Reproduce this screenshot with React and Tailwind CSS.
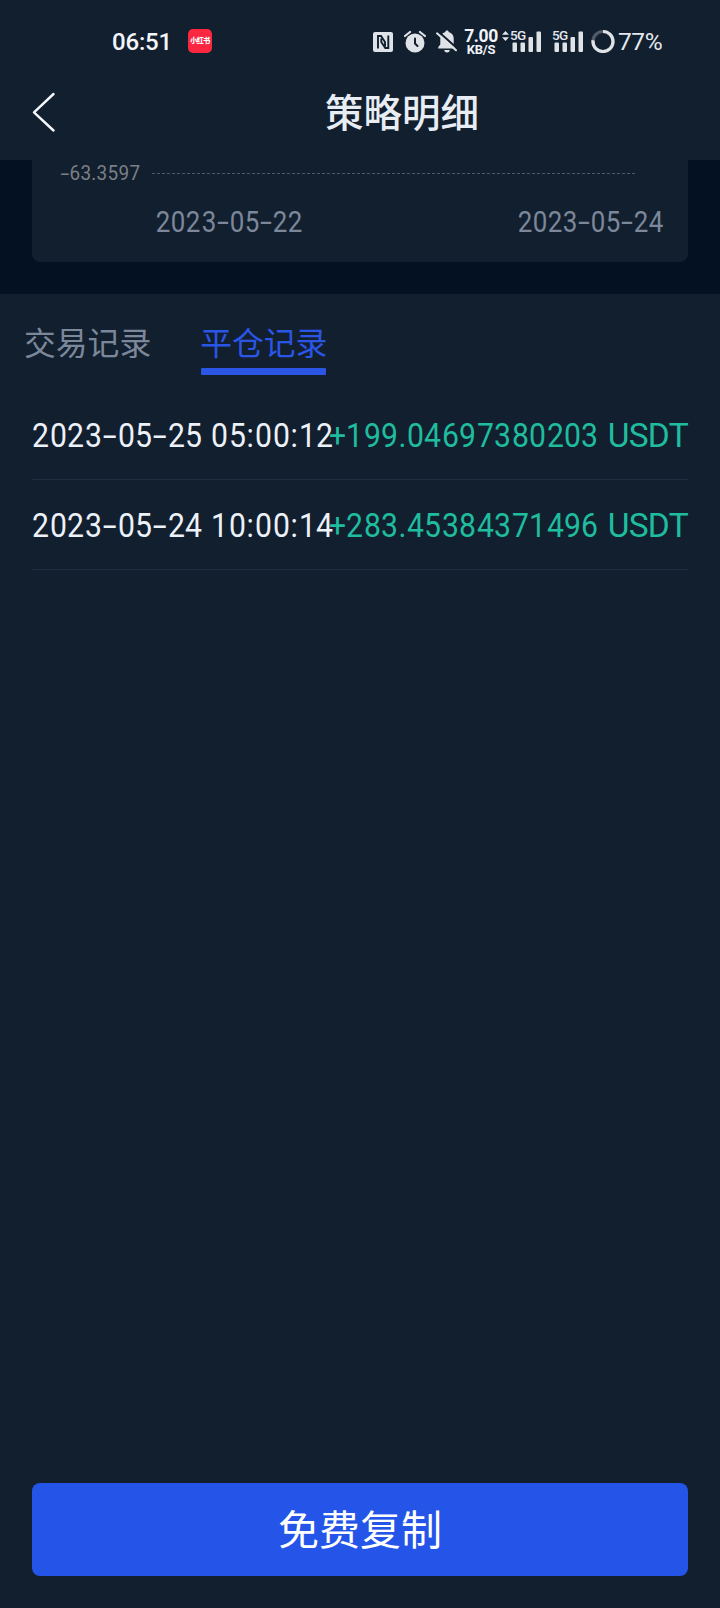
import React, { useState } from 'react';
import clsx from 'clsx';

const records = [
  { time: '2023-05-25 05:00:12', profit: '+199.04697380203', unit: 'USDT' },
  { time: '2023-05-24 10:00:14', profit: '+283.45384371496', unit: 'USDT' },
];

const tabs = ['交易记录', '平仓记录'];

// width of each character cell, digits share one width
const cellClass = (char) => {
  if (char === '-') return 'w-[0.455em]';
  if (char === '+') return 'w-[0.47em]';
  if (char === ':') return 'w-[0.26em]';
  if (char === '.') return 'w-[0.24em]';
  if (char === ' ') return 'w-[0.26em]';
  return 'w-[0.522em]';
};

const Figures = ({ value, className }) => (
  <span className={clsx('inline-flex whitespace-pre leading-none', className)}>
    {value.split('').map((char, i) => (
      <span key={i} className={clsx('flex justify-center', cellClass(char))}>
        <span className={clsx(char === '-' ? 'scale-x-[1.5]' : 'scale-x-[0.9]')}>{char}</span>
      </span>
    ))}
  </span>
);

const Signal = () => (
  <span className="relative block w-8 h-6">
    <svg className="block" width="32" height="24" viewBox="0 0 32 24" fill="#dfe3e7">
      <rect x="2.500" y="13.500" width="4.500" height="9.500" rx="1" />
      <rect x="10.500" y="13.500" width="4.500" height="9.500" rx="1" />
      <rect x="18.500" y="8" width="4.500" height="15" rx="1" />
      <rect x="26.500" y="2.500" width="4.500" height="20.500" rx="1" />
    </svg>
    <span className="absolute left-0 top-0 text-[13.500px] leading-[13px] font-medium tracking-[-0.6px]">5G</span>
  </span>
);

const StatusBar = () => (
  <div className="h-[84px] flex items-start pt-[29px] pl-[112px] text-[#e4e8ee]">
    <span className="w-[76px] mt-px text-[24px] leading-6 font-medium tracking-[-0.2px] text-[#f2f5f9]">06:51</span>
    <span className="w-6 h-6 rounded-[5px] bg-[#fb2640] text-white flex items-center justify-center text-[7px] leading-none font-black whitespace-nowrap tracking-[-0.5px]">
      小红书
    </span>

    {/* NFC */}
    <svg className="ml-[161px]" width="20" height="24" viewBox="0 0 20 24">
      <rect x="0" y="3" width="20" height="20" rx="2" fill="#dfe3e7" />
      <path d="M5 19.500V7h3l4 6v4.500M15.300 6.500V19h-3L8.300 13V9.500" fill="none" stroke="#121f2f" strokeWidth="1.900" />
    </svg>
    {/* Alarm */}
    <svg className="ml-[11px]" width="22" height="24" viewBox="0 0 22 24">
      <circle cx="11" cy="14" r="9.500" fill="#dfe3e7" />
      <path d="M1 7l5-4M21 7l-5-4" stroke="#dfe3e7" strokeWidth="2.200" strokeLinecap="round" />
      <path d="M11 9.500v5l2.500 2.500" fill="none" stroke="#121f2f" strokeWidth="2" strokeLinecap="round" />
    </svg>
    {/* Muted bell */}
    <svg className="ml-[10px]" width="22" height="24" viewBox="0 0 22 24">
      <path d="M11 1.500c1 0 1.700.7 1.700 1.600 3 .8 5 3.300 5 6.400v6l2 2.500v1.500H2.300V18l2-2.500v-6c0-3.100 2-5.600 5-6.400 0-.9.7-1.600 1.700-1.600z" fill="#dfe3e7" />
      <path d="M8.300 21h5.400a2.700 2.500 0 0 1-5.400 0z" fill="#dfe3e7" />
      <path d="M2.800 3l19 17" stroke="#121f2f" strokeWidth="2" />
      <path d="M1 4.300l19 17" stroke="#dfe3e7" strokeWidth="2" strokeLinecap="round" />
    </svg>

    <span className="ml-[5px] w-9 flex flex-col items-center text-[#f0f3f7]">
      <span className="text-[17.500px] leading-[15px] font-bold tracking-[-0.4px]">7.00</span>
      <span className="mt-px text-[13px] leading-[10px] font-bold tracking-[-0.2px]">KB/S</span>
    </span>
    <svg className="ml-[3px] mt-[2px]" width="7" height="10" viewBox="0 0 7 10" fill="#dfe3e7">
      <path d="M3.500 0L7 3.800H0zM3.500 10L0 6.200h7z" />
    </svg>
    <span className="ml-[1px]"><Signal /></span>
    <span className="ml-[10px]"><Signal /></span>

    <svg className="ml-[7px]" width="24" height="24" viewBox="0 0 24 24" fill="none" strokeWidth="3.200">
      <circle cx="12" cy="12.500" r="10" stroke="#505a68" />
      <circle cx="12" cy="12.500" r="10" stroke="#dfe3e7" pathLength="100" strokeDasharray="77 23" transform="rotate(-90 12 12.500)" />
    </svg>
    <span className="ml-[3px] mt-px text-[24.500px] leading-6 tracking-[-0.4px]">77%</span>
  </div>
);

const App = () => {
  const [activeTab, setActiveTab] = useState('平仓记录');

  return (
    <div className="w-[720px] h-[1608px] overflow-hidden flex flex-col bg-[#121f2f] font-[Roboto,'Noto_Sans_CJK_SC',sans-serif]">
      <StatusBar />

      {/* Title bar */}
      <header className="h-[76px] flex items-start pl-8">
        <button className="mt-2">
          <svg width="24" height="40" viewBox="0 0 24 40" fill="none" stroke="#f4f7fb" strokeWidth="2.400" strokeLinecap="round" strokeLinejoin="round">
            <path d="M21.500 2L2 20.300 21.500 38.500" />
          </svg>
        </button>
        <h1 className="ml-[269px] mt-[2px] text-[38.500px] leading-[56px] font-medium text-[#e8edf4]">策略明细</h1>
      </header>

      {/* Chart bottom */}
      <section className="h-[134px] px-8 bg-[#041123]">
        <div className="h-[102px] rounded-b-lg bg-[#121f2f] pl-[29px] pr-6 pt-[3px]">
          <div className="flex items-center h-[21px]">
            <Figures value="-63.3597" className="w-[79px] text-[21px] text-[#7b8086]" />
            <svg className="ml-3" width="483" height="2" viewBox="0 0 483 2">
              <path d="M0 .5h483" stroke="#4f5966" strokeWidth="1" strokeDasharray="3 2" />
            </svg>
          </div>
          <div className="flex justify-between mt-6 pl-[95px] text-[28.800px] text-[#7c879a]">
            <Figures value="2023-05-22" />
            <Figures value="2023-05-24" />
          </div>
        </div>
      </section>

      {/* Tabs */}
      <div className="flex gap-[49px] pl-[24px] pt-[26px] h-[96px]">
        {tabs.map((tab) => (
          <button
            key={tab}
            onClick={() => setActiveTab(tab)}
            className={clsx(
              'flex flex-col items-center text-[31.800px] leading-[48px]',
              activeTab === tab ? 'text-[#2a55e5]' : 'text-[#7c879a]'
            )}
          >
            {tab}
            {activeTab === tab && <span className="w-[125px] h-[7px] rounded-[1px] bg-[#2a55e5]" />}
          </button>
        ))}
      </div>

      {/* Records */}
      <ul className="flex-1 px-8">
        {records.map((item) => (
          <li key={item.time} className="h-[90px] pt-[2px] flex items-center justify-between border-b border-[#202c3d] text-[33.500px] leading-none">
            <Figures value={item.time} className="text-[#edf1f8]" />
            <span className="flex -ml-10 text-[#1fbc9e]">
              <Figures value={item.profit} />
              <span className="ml-[9px] tracking-[-0.7px]">{item.unit}</span>
            </span>
          </li>
        ))}
      </ul>

      <div className="px-8 pb-8">
        <button className="w-full h-[93px] pt-[3px] rounded-lg bg-[#2455e8] text-[41px] leading-none text-white">免费复制</button>
      </div>
    </div>
  );
};

export default App;
